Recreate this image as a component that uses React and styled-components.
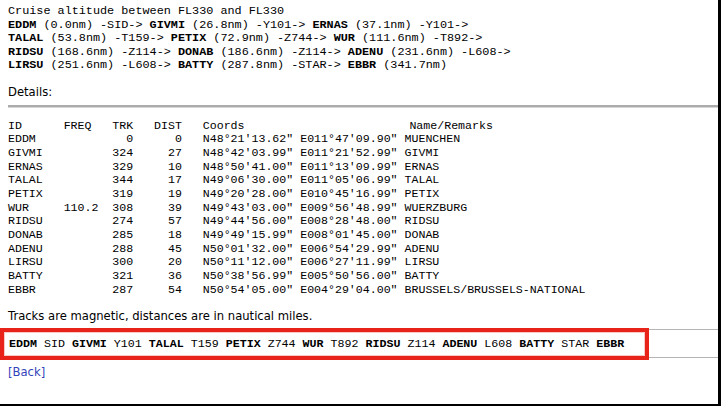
import React from "react";
import styled, { createGlobalStyle } from "styled-components";

const Global = createGlobalStyle`
  html, body { margin: 0; padding: 0; background: #fff; }
  body { width: 721px; height: 406px; overflow: hidden; }
`;

const Frame = styled.div`
  box-sizing: border-box;
  width: 721px;
  height: 406px;
  border-right: 3px solid #000;
  border-bottom: 2px solid #000;
  padding: 5px 0 0 8px;
  background: #fff;
  color: #000;
  overflow: hidden;
`;

const Mono = styled.div`
  font-family: "Liberation Mono", "Courier New", monospace;
  font-size: 11.6px;
  line-height: 13.5px;
  white-space: pre;
`;

const Summary = styled(Mono)`
  font-size: 11.8px;
`;

const Line = styled.div``;

const Fix = styled.b`
  font-weight: bold;
`;

const Sans = styled.div`
  font-family: "DejaVu Sans", Verdana, sans-serif;
  font-size: 11.6px;
  line-height: 15px;
`;

const Label = styled(Sans)`
  margin-top: ${(p) => p.$mt || 0}px;
`;

const Rule = styled.div`
  height: 2px;
  margin-top: ${(p) => p.$mt || 0}px;
  background: #ababab;
  border-bottom: 1px solid #d6d6d6;
`;

const Table = styled(Mono)`
  margin-top: 11px;
  line-height: 13.67px;
`;

const Row = styled.div`
  display: grid;
  grid-template-columns: 8ch 5ch 5ch 7ch 32ch auto;
`;

const Cell = styled.span`
  text-align: ${(p) => (p.$right ? "right" : "left")};
  padding-left: ${(p) => p.$pad || 0};
`;

const RouteBar = styled.div`
  position: relative;
  box-sizing: border-box;
  margin-top: 5px;
  height: 29px;
  padding-top: 7px;
  border-top: 1px solid #b5b5b5;
  border-bottom: 1px solid #b5b5b5;
`;

const RouteText = styled(Mono)`
  font-size: 11.65px;
  padding-left: 1px;
`;

const Highlight = styled.div`
  position: absolute;
  left: -8px;
  top: -2px;
  width: 649px;
  height: 32px;
  box-sizing: border-box;
  border: 4px solid #e8231a;
  box-shadow: inset 0 0 0 1px #f6c9c5;
  pointer-events: none;
`;

const BackLink = styled.a`
  display: inline-block;
  margin-top: 7px;
  font-family: "DejaVu Sans", Verdana, sans-serif;
  font-size: 11.6px;
  line-height: 15px;
  color: #3344bb;
  text-decoration: none;
`;

const summary = [
  [["", "Cruise altitude between FL330 and FL330"]],
  [["EDDM", " (0.0nm) -SID-> "], ["GIVMI", " (26.8nm) -Y101-> "], ["ERNAS", " (37.1nm) -Y101->"]],
  [["TALAL", " (53.8nm) -T159-> "], ["PETIX", " (72.9nm) -Z744-> "], ["WUR", " (111.6nm) -T892->"]],
  [["RIDSU", " (168.6nm) -Z114-> "], ["DONAB", " (186.6nm) -Z114-> "], ["ADENU", " (231.6nm) -L608->"]],
  [["LIRSU", " (251.6nm) -L608-> "], ["BATTY", " (287.8nm) -STAR-> "], ["EBBR", " (341.7nm)"]],
];

const rows = [
  ["EDDM", "", "0", "0", "N48°21'13.62\" E011°47'09.90\"", "MUENCHEN"],
  ["GIVMI", "", "324", "27", "N48°42'03.99\" E011°21'52.99\"", "GIVMI"],
  ["ERNAS", "", "329", "10", "N48°50'41.00\" E011°13'09.99\"", "ERNAS"],
  ["TALAL", "", "344", "17", "N49°06'30.00\" E011°05'06.99\"", "TALAL"],
  ["PETIX", "", "319", "19", "N49°20'28.00\" E010°45'16.99\"", "PETIX"],
  ["WUR", "110.2", "308", "39", "N49°43'03.00\" E009°56'48.99\"", "WUERZBURG"],
  ["RIDSU", "", "274", "57", "N49°44'56.00\" E008°28'48.00\"", "RIDSU"],
  ["DONAB", "", "285", "18", "N49°49'15.99\" E008°01'45.00\"", "DONAB"],
  ["ADENU", "", "288", "45", "N50°01'32.00\" E006°54'29.99\"", "ADENU"],
  ["LIRSU", "", "300", "20", "N50°11'12.00\" E006°27'11.99\"", "LIRSU"],
  ["BATTY", "", "321", "36", "N50°38'56.99\" E005°50'56.00\"", "BATTY"],
  ["EBBR", "", "287", "54", "N50°54'05.00\" E004°29'04.00\"", "BRUSSELS/BRUSSELS-NATIONAL"],
];

const route = [
  ["EDDM", true], ["SID", false], ["GIVMI", true], ["Y101", false], ["TALAL", true],
  ["T159", false], ["PETIX", true], ["Z744", false], ["WUR", true], ["T892", false],
  ["RIDSU", true], ["Z114", false], ["ADENU", true], ["L608", false], ["BATTY", true],
  ["STAR", false], ["EBBR", true],
];

export default function App() {
  return (
    <>
      <Global />
      <Frame>
        <Summary>
          {summary.map((parts, i) => (
            <Line key={i}>
              {parts.map(([fix, rest], j) => (
                <React.Fragment key={j}>
                  {fix && <Fix>{fix}</Fix>}
                  {rest}
                </React.Fragment>
              ))}
            </Line>
          ))}
        </Summary>
        <Label $mt={12}>Details:</Label>
        <Rule $mt={5} />
        <Table>
          <Row>
            <Cell>ID</Cell>
            <Cell>FREQ</Cell>
            <Cell $right>TRK</Cell>
            <Cell $right>DIST</Cell>
            <Cell $pad="3ch">Coords</Cell>
            <Cell $pad="0.7ch">Name/Remarks</Cell>
          </Row>
          {rows.map((r) => (
            <Row key={r[0]}>
              <Cell>{r[0]}</Cell>
              <Cell>{r[1]}</Cell>
              <Cell $right>{r[2]}</Cell>
              <Cell $right>{r[3]}</Cell>
              <Cell $pad="3ch">{r[4]}</Cell>
              <Cell>{r[5]}</Cell>
            </Row>
          ))}
        </Table>
        <Label $mt={13}>Tracks are magnetic, distances are in nautical miles.</Label>
        <RouteBar>
          <RouteText>
            {route.map(([t, bold], i) => (
              <React.Fragment key={i}>
                {i > 0 && " "}
                {bold ? <Fix>{t}</Fix> : t}
              </React.Fragment>
            ))}
          </RouteText>
          <Highlight />
        </RouteBar>
        <BackLink href="#">[Back]</BackLink>
      </Frame>
    </>
  );
}
